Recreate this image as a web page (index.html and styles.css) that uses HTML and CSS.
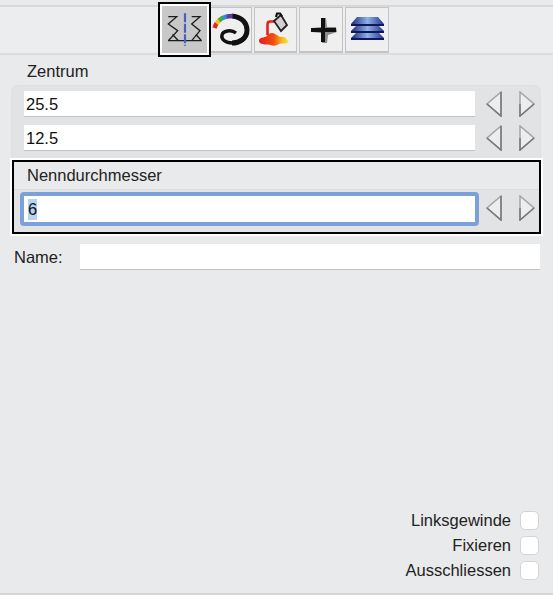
FILE: index.html
```html
<!DOCTYPE html>
<html lang="de">
<head>
<meta charset="utf-8">
<title>Gewinde</title>
<link rel="stylesheet" href="styles.css">
</head>
<body>
<div class="panel">
  <div class="toolbar">
    <button class="tool active">
      <svg width="36" height="36" viewBox="0 0 36 36" fill="none" stroke="#1c1c1c" stroke-width="1.3">
        <path d="M1.3 4.7h8.400L1.300 12l9.400 6.700-9.400 10"/><path d="M24.700 4.700H33L24.700 12 33 18.700l-8.300 10"/>
        <path d="M1.300 28.700H34.500"/><path d="M5.500 22.500l6 6.200M29 22.500l5.500 6.200"/>
        <path d="M18 1.300v32.400" stroke="#4a5fc0" stroke-width="2.200" stroke-dasharray="9 1.500"/>
      </svg>
    </button>
    <button class="tool tool-wide-clip">
      <svg width="41" height="44" viewBox="-3 0 41 44" fill="none">
        <path d="M19 8C30 9 34 16 34 22C34 31 26 35 19 35" stroke="#111" stroke-width="5"/>
        <path d="M19.500 35C12 35 8 31 9 27C10 23 18 21 23 25" stroke="#111" stroke-width="3.400"/>
        <path d="M1.500 20L3.500 15" stroke="#e8242a" stroke-width="4.500"/>
        <path d="M3.500 15.500L6.500 12" stroke="#f5c020" stroke-width="4.500"/>
        <path d="M6 12.500L10 9.500" stroke="#3fae3a" stroke-width="4.500"/>
        <path d="M9.500 10L14 8.300" stroke="#2f8fd0" stroke-width="4.500"/>
        <path d="M13.500 8.500L19.500 8" stroke="#5b3aa8" stroke-width="4.500"/>
      </svg>
    </button>
    <button class="tool">
      <svg width="41" height="44" viewBox="0 0 41 44">
        <defs><linearGradient id="paint" x1="0" x2="1" y1="0" y2="0"><stop offset="0" stop-color="#e81c1c"/><stop offset=".5" stop-color="#f0500f"/><stop offset=".8" stop-color="#f6c020"/><stop offset="1" stop-color="#f7e62a"/></linearGradient></defs>
        <path d="M4 33c0-4 5-3 8-5 1-3 6-4 8-2 3 1 4 3 6 3 3-1 5 1 6 3 2 1 2 3 0 3-3 1-6 0-8 1-3 2-6 2-8 1-4-1-6 0-8-1-2 0-4-1-4-3z" fill="url(#paint)"/>
        <path d="M20 13.500h-5c-2 0-2.500 1-2.500 3V27" fill="none" stroke="#e3221e" stroke-width="2.600"/>
        <path d="M19 13l7-6 6 10-6 6z" fill="#d0d0d0" stroke="#222" stroke-width="1.800"/>
        <path d="M21 9l1-3.500 3 0 2 3" fill="none" stroke="#111" stroke-width="2.200"/>
      </svg>
    </button>
    <button class="tool tool-wide">
      <svg width="41" height="44" viewBox="0 0 41 44">
        <path d="M20 10h5l1 9h9l1 5-9 3-1 8h-5l-1-10-9-1v-4l9-1z" fill="#8a8a8a"/>
        <path d="M20 10h4v10h11v4H24v10h-4V24H10v-4h10z" fill="#111"/>
      </svg>
    </button>
    <button class="tool tool-wide">
      <svg width="41" height="44" viewBox="0 0 41 44">
        <defs><linearGradient id="layer" x1="0" x2="1" y1="0" y2="0"><stop offset="0" stop-color="#1c2a78"/><stop offset=".5" stop-color="#8fb0e8"/><stop offset="1" stop-color="#24348c"/></linearGradient></defs>
        <path d="M4 30l6-6h21l6 6z" fill="url(#layer)"/><path d="M4 30h33v2H4z" fill="#10175a"/>
        <path d="M4 23l6-6h21l6 6z" fill="url(#layer)"/><path d="M4 23h33v2H4z" fill="#10175a"/>
        <path d="M4 16l6-7h21l6 7z" fill="url(#layer)"/><path d="M4 16h33v2H4z" fill="#10175a"/>
      </svg>
    </button>
  </div>

  <div class="section-title">Zentrum</div>
  <div class="group">
    <div class="row">
      <input class="field" type="text" value="25.5">
      <div class="stepper">
        <svg class="arrow" viewBox="0 0 16 26"><path d="M15 1v24L1 13z"/><path class="shade" d="M15 1v24L1 13"/></svg>
        <svg class="arrow" viewBox="0 0 16 26"><path d="M1 1v24l14-12z"/><path class="shade" d="M1 13v12l14-12"/></svg>
      </div>
    </div>
    <div class="row">
      <input class="field" type="text" value="12.5">
      <div class="stepper">
        <svg class="arrow" viewBox="0 0 16 26"><path d="M15 1v24L1 13z"/><path class="shade" d="M15 1v24L1 13"/></svg>
        <svg class="arrow" viewBox="0 0 16 26"><path d="M1 1v24l14-12z"/><path class="shade" d="M1 13v12l14-12"/></svg>
      </div>
    </div>
  </div>

  <div class="selected">
    <div class="selected-title">Nenndurchmesser</div>
    <div class="selected-row">
      <div class="field focus"><span class="sel">6</span></div>
      <div class="stepper stepper-focus">
        <svg class="arrow" viewBox="0 0 16 26"><path d="M15 1v24L1 13z"/><path class="shade" d="M15 1v24L1 13"/></svg>
        <svg class="arrow" viewBox="0 0 16 26"><path d="M1 1v24l14-12z"/><path class="shade" d="M1 13v12l14-12"/></svg>
      </div>
    </div>
  </div>

  <div class="name-row">
    <label class="name-label">Name:</label>
    <input class="field name-field" type="text">
  </div>

  <div class="checks">
    <label class="check">Linksgewinde<span class="box"></span></label>
    <label class="check">Fixieren<span class="box"></span></label>
    <label class="check">Ausschliessen<span class="box"></span></label>
  </div>
</div>
</body>
</html>
```
FILE: styles.css
```css
* { box-sizing: border-box; }
html, body { margin: 0; height: 100%; }
body {
  background: #fff;
  font-family: "Liberation Sans", Arial, sans-serif;
  font-size: 16.5px;
  color: #222;
  overflow: hidden;
}
.panel {
  width: 553px;
  height: 595px;
  background: #e9eaeb;
  border-bottom: 2px solid #d6d6d6;
  display: flex;
  flex-direction: column;
  padding-top: 5px;
}
.toolbar {
  height: 50px;
  flex: none;
  display: flex;
  gap: 2px;
  padding-left: 158px;
  background: #ecedee;
  border-top: 2px solid #d8d8d8;
  border-bottom: 2px solid #dcdcdc;
  align-items: flex-start;
}
.tool {
  width: 43px;
  height: 46px;
  flex: none;
  margin: 0;
  padding: 0;
  background: #efefef;
  border: 1px solid #c4c4c4;
  border-bottom-width: 2px;
  display: flex;
  align-items: center;
  justify-content: center;
}
.tool-wide { width: 44px; }
.tool svg { display: block; }
.tool.active {
  width: 53px;
  height: 55px;
  margin: -5px -4px 0 0;
  background: #c8c8c8;
  border: 2px solid #000;
  outline: 2px solid #fff;
  outline-offset: -4px;
  position: relative;
  z-index: 1;
}
.section-title { margin: 7px 0 0 27px; line-height: 18px; height: 18px; flex: none; }
.group {
  margin: 5px 12px 0 11px;
  padding: 5px 5px 9px 12px;
  background: #e2e3e5;
  border: 1px solid #dfdfdf;
  border-bottom: 0;
  border-radius: 7px 7px 0 0;
  display: flex;
  flex-direction: column;
  gap: 8px;
  flex: none;
}
.row { display: flex; align-items: center; height: 26px; }
.field {
  height: 26px;
  flex: 1;
  min-width: 0;
  border: 0;
  border-bottom: 1px solid #c2c2c2;
  background: #fff;
  font: inherit;
  color: #111;
  padding: 2px 2px 0;
  outline: none;
  display: block;
}
.stepper { width: 60px; flex: none; display: flex; justify-content: space-between; padding-left: 11px; }
.stepper-focus { padding: 0 4px 0 7px; margin-top: 3px; }
.arrow { width: 16px; height: 26px; display: block; }
.arrow path { fill: #ecedee; stroke: #a6a6a6; stroke-width: 1.500; }
.arrow .shade { fill: none; stroke: #787878; }
.selected {
  margin: 0 12px;
  height: 74px;
  flex: none;
  background: #e9eaeb;
  border: 2px solid #000;
  outline: 2px solid #fff;
  display: flex;
  flex-direction: column;
}
.selected-title { height: 28px; padding: 3px 0 0 13px; line-height: 20px; border-bottom: 1px solid #dcdcdc; }
.selected-row { height: 42px; display: flex; align-items: flex-start; padding: 2px 0 0 6px; background: #e2e3e5; }
.field.focus {
  height: 34px;
  border: 4px solid #7ba2d8;
  border-radius: 4px;
  line-height: 27px;
  padding: 0 0 0 4px;
}
.sel { background: #b5d3f3; display: inline-block; line-height: 21px; }
.name-row { display: flex; align-items: center; margin: 10px 13px 0 14px; height: 26px; flex: none; }
.name-label { width: 66px; flex: none; }
.checks {
  margin: auto 14px 13px 0;
  display: flex;
  flex-direction: column;
  align-items: flex-end;
  gap: 5px;
}
.check { display: flex; align-items: center; gap: 9px; height: 20px; }
.box {
  width: 19px;
  height: 19px;
  background: #fff;
  border: 1px solid #d4d4d4;
  border-radius: 5px;
}
```
